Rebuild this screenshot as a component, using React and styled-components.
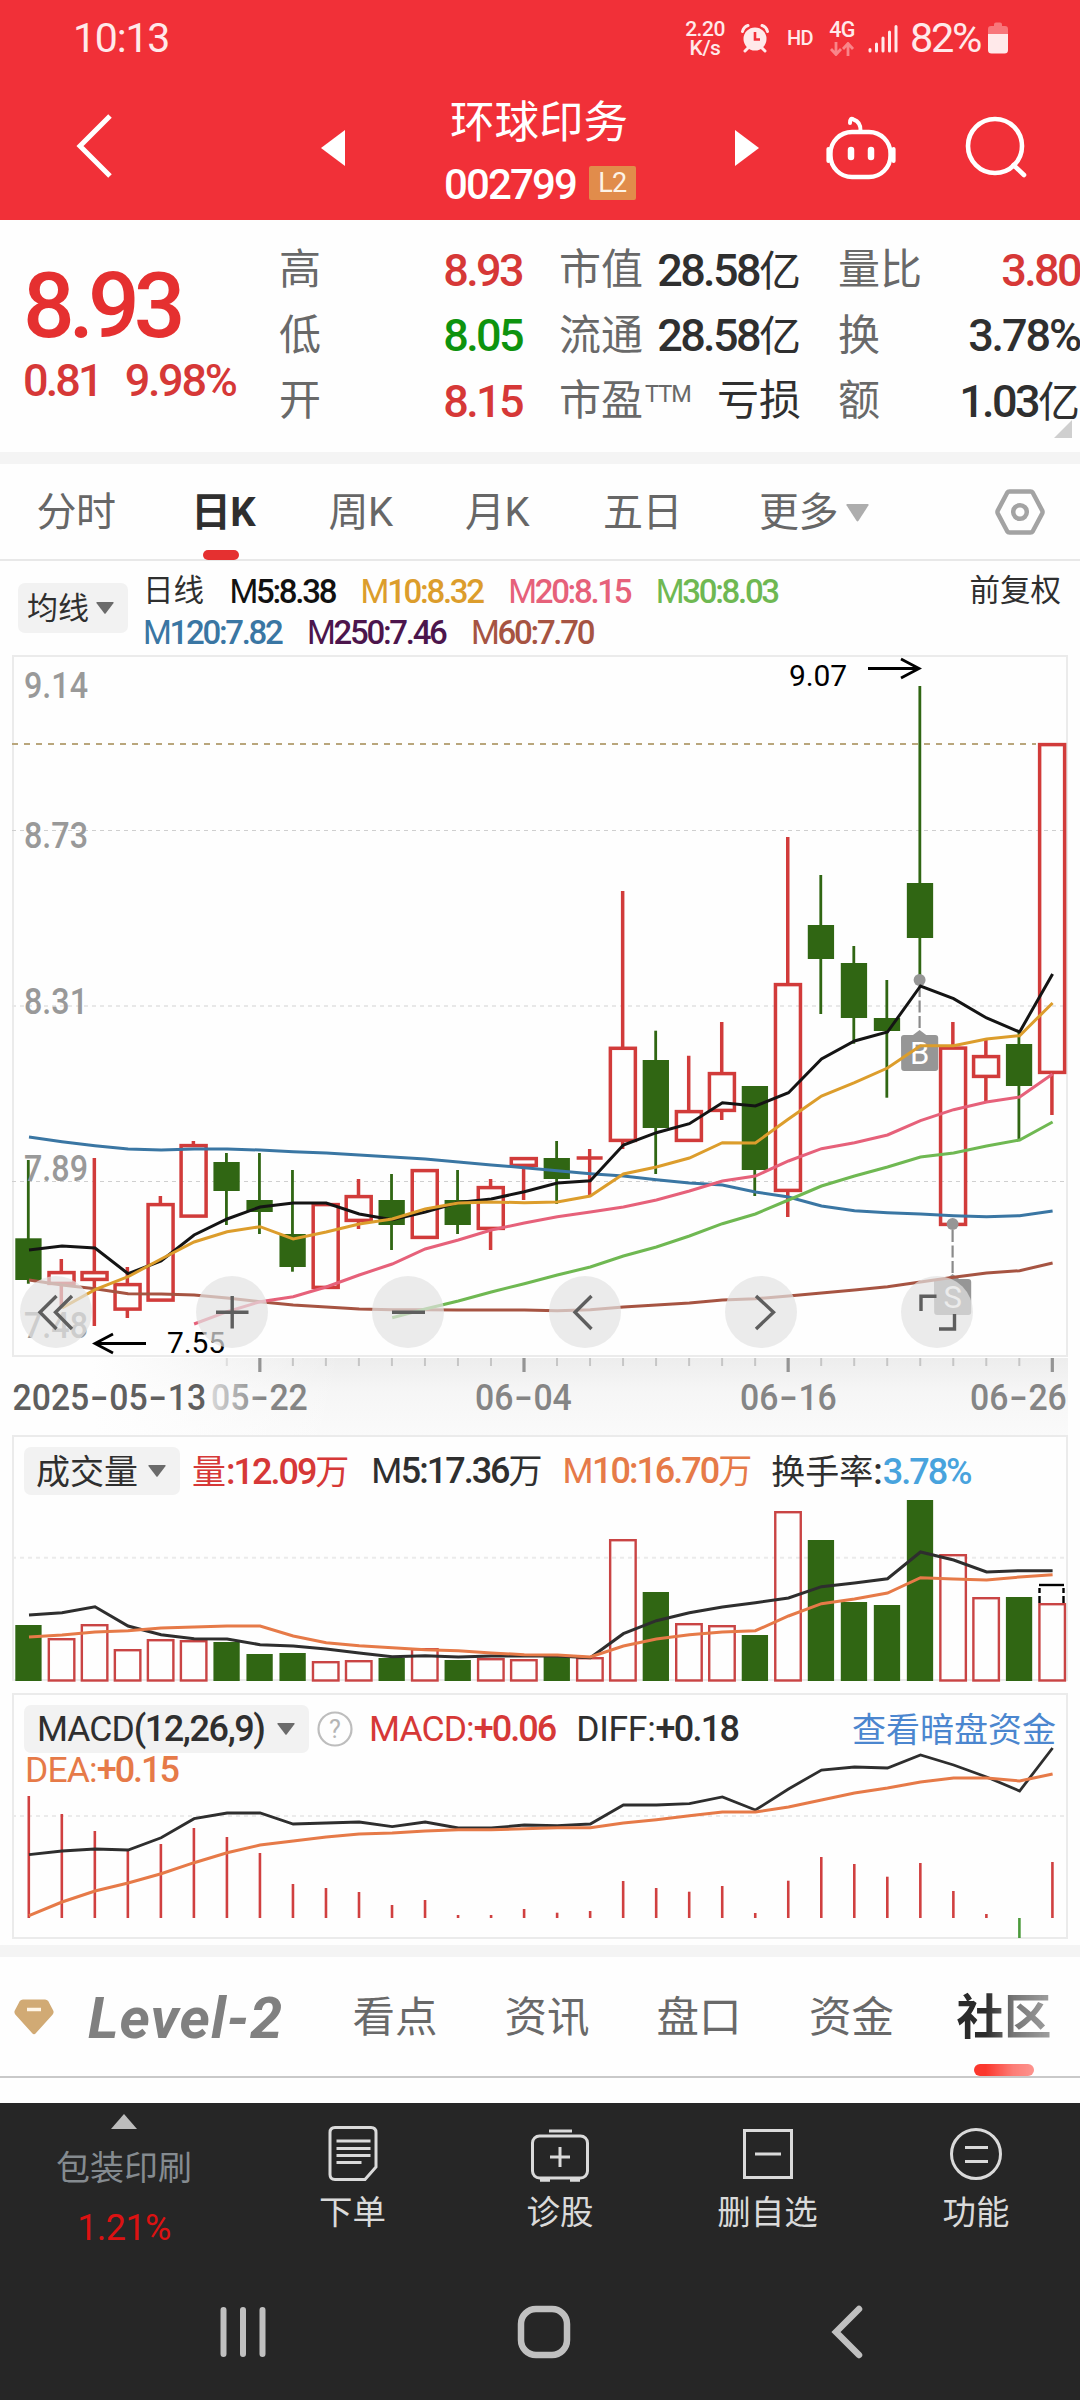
import React from "react";
import styled, { createGlobalStyle, css } from "styled-components";

const RED = "#e53030";
const CANDLE_RED = "#d13b3a";
const CANDLE_GREEN = "#306613";
const FRAME = "#ebebeb";
const ORANGE = "#e67a48";
const INK = "#2f2f2f";

const GlobalStyle = createGlobalStyle`
  * { box-sizing: border-box; }
  body { margin: 0; background: #fff; }
  #root { width: 1080px; }
`;

const Screen = styled.main`
  width: 1080px;
  height: 2400px;
  display: flex;
  flex-direction: column;
  overflow: hidden;
  background: #fefefe;
  color: ${INK};
  font-family: Roboto, "Noto Sans CJK SC", sans-serif;
  line-height: 1;
  white-space: nowrap;
  svg { display: block; flex: none; }
`;

const Num = styled.span`
  font-size: ${(p) => p.$size || 45}px;
  font-weight: ${(p) => p.$weight || 500};
  letter-spacing: ${(p) => p.$track ?? -2.6}px;
  color: ${(p) => p.$color || "inherit"};
`;

/* ---------- status bar and header ---------- */

const Top = styled.header`
  height: 220px;
  flex: none;
  background: #f13038;
  color: #fff;
`;

const StatusBar = styled.div`
  height: 76px;
  display: flex;
  align-items: center;
  padding: 0 72px 0 73px;
  color: #ffe9ea;
`;

const Clock = styled.span`
  flex: 1;
  font-size: 41px;
  letter-spacing: -1.2px;
`;

const Speed = styled.div`
  width: 40px;
  margin-right: 15px;
  display: flex;
  flex-direction: column;
  align-items: center;
  font-size: 21px;
  font-weight: 500;
  line-height: 18.5px;
  letter-spacing: -0.5px;
  padding-top: 1px;
`;

const Small = styled.span`
  font-size: 20px;
  font-weight: 500;
  letter-spacing: -0.8px;
  width: 42px;
  padding-left: 17px;
`;

const Network = styled.div`
  width: 28px;
  margin: 0 12px 0 16px;
  display: flex;
  flex-direction: column;
  align-items: center;
  gap: 4px;
  font-size: 21.5px;
  font-weight: 500;
  line-height: 17px;
  letter-spacing: -0.8px;
`;

const Charge = styled.span`
  font-size: 41.5px;
  letter-spacing: -2.3px;
  width: 90px;
  padding-left: 12px;
`;

const TitleBar = styled.div`
  height: 144px;
  display: grid;
  grid-template-columns: 300px 66px 348px 66px 300px;
  align-items: center;
`;

const BackSlot = styled.div`
  padding: 0 0 4px 74px;
`;

const ArrowSlot = styled.div`
  display: flex;
  justify-content: center;
`;

const TitleBlock = styled.div`
  align-self: stretch;
  display: flex;
  flex-direction: column;
  align-items: center;
  padding-top: 24px;
`;

const Title = styled.h1`
  margin: 0 0 0 -2px;
  font-size: 44.5px;
  font-weight: 400;
  line-height: 46px;
`;

const CodeRow = styled.div`
  display: flex;
  align-items: center;
  gap: 13px;
  margin-top: 20px;
  height: 34px;
`;

const Code = styled(Num)`
  padding-top: 3px;
`;

const LevelBadge = styled.span`
  width: 47px;
  height: 34px;
  display: flex;
  align-items: center;
  justify-content: center;
  background: #e18c4b;
  border-radius: 2px;
  font-size: 27px;
  letter-spacing: -0.6px;
  color: #fdf3e6;
`;

const HeaderActions = styled.div`
  display: flex;
  gap: 67px;
  padding: 0 0 0 45px;
`;

/* ---------- quote ---------- */

const Quote = styled.section`
  height: 232px;
  flex: none;
  display: grid;
  grid-template-columns: 279px 243px 37px 242px 37px 242px;
`;

const PriceBlock = styled.div`
  padding: 43px 0 0 23px;
`;

const Price = styled.div`
  font-size: 91px;
  font-weight: 500;
  letter-spacing: -6px;
  line-height: 87px;
  color: ${RED};
`;

const Change = styled.div`
  display: flex;
  gap: 24px;
  margin-top: 8px;
  line-height: 45px;
  color: #d63837;
`;

const Facts = styled.dl`
  margin: 0;
  padding-top: 17.5px;
`;

const Fact = styled.div`
  height: 65.5px;
  display: flex;
  justify-content: space-between;
  align-items: center;
  dt { font-size: 42px; color: #696969; }
  sup { font-size: 23.5px; font-weight: 400; vertical-align: 13px; line-height: 0; letter-spacing: -1px; margin-left: 2px; }
  dd { margin: 0; font-size: 42px; color: ${(p) => p.$color || INK}; }
`;

const Band = styled.div`
  height: 12px;
  flex: none;
  background: #f4f4f4;
`;

const Spacer = styled.div``;

const MoreCorner = styled.div`
  width: 18px;
  height: 18px;
  margin: -14px 8px 0 auto;
  background: #cfcfcf;
  clip-path: polygon(100% 0, 100% 100%, 0 100%);
`;

/* ---------- period tabs ---------- */

const PeriodTabs = styled.nav`
  height: 97px;
  flex: none;
  display: grid;
  grid-template-columns: 152px 142px 133px 140px 151px 192px 170px;
  border-bottom: 2px solid #e8e8e8;
`;

const Period = styled.div`
  position: relative;
  display: flex;
  align-items: center;
  justify-content: center;
  gap: 8px;
  font-size: 40px;
  color: ${(p) => (p.$active ? INK : "#676767")};
  font-weight: ${(p) => (p.$active ? 700 : 400)};
  letter-spacing: -0.6px;
  padding-top: 3px;
  ${(p) =>
    p.$active &&
    css`
      &::after {
        content: "";
        position: absolute;
        bottom: -1px;
        width: 36px;
        height: 10px;
        border-radius: 5px;
        background: ${RED};
        transform: translateX(-2px);
      }
    `}
`;

const SettingSlot = styled.div`
  display: flex;
  align-items: center;
  justify-content: flex-end;
  padding-right: 35px;
`;

/* ---------- indicators ---------- */

const MaBar = styled.div`
  height: 94px;
  flex: none;
  display: flex;
  padding: 10px 19px 0 18px;
`;

const Chip = styled.div`
  width: ${(p) => p.$w}px;
  height: ${(p) => p.$h}px;
  flex: none;
  display: flex;
  align-items: center;
  justify-content: space-between;
  padding: 0 14px 0 ${(p) => p.$pad || 9}px;
  background: #f2f2f2;
  border-radius: 7px;
  font-size: ${(p) => p.$size}px;
`;

const MaChipSlot = styled.div`
  width: 125px;
  padding-top: 12px;
`;

const MaLegend = styled.div`
  flex: 1;
`;

const MaRow = styled.div`
  display: flex;
  gap: 25.5px;
  height: 41px;
  align-items: center;
  font-size: 30.5px;
`;

const Reading = styled.span`
  font-size: 33px;
  color: ${(p) => p.$color};
  font-weight: 500;
  letter-spacing: -2.3px;
  i { font-style: normal; font-weight: 400; }
`;

const Adjust = styled.span`
  font-size: 30.5px;
  height: 41px;
  line-height: 40px;
`;

const Panel = styled.section`
  width: 1056px;
  height: ${(p) => p.$h}px;
  flex: none;
  margin: 0 0 ${(p) => p.$mb || 0}px 12px;
  display: grid;
  > * { grid-area: 1 / 1; }
`;

const ButtonRow = styled.div`
  align-self: end;
  display: flex;
  justify-content: space-between;
  padding: 0 95px 0 8px;
  margin-bottom: 10px;
`;

const RoundButton = styled.button`
  width: 72px;
  height: 72px;
  padding: 0;
  border: 0;
  border-radius: 50%;
  background: rgba(226, 226, 226, 0.7);
`;

const AxisArea = styled.div`
  width: 1056px;
  height: 77px;
  flex: none;
  margin-left: 12px;
  background: linear-gradient(90deg, #fefefe 0, #fefefe 80px, rgba(254,254,254,0) 330px),
    linear-gradient(180deg, #ededed 0, #f6f6f6 45%, #fafafa 100%);
`;

const IndicatorHead = styled.div`
  display: flex;
  align-items: center;
  height: 48px;
  margin: ${(p) => p.$mt}px 0 0 12px;
  font-size: 34px;
`;

const HeadItem = styled.span`
  margin-left: ${(p) => p.$ml}px;
  padding-top: ${(p) => p.$drop || 0}px;
  color: ${(p) => p.$color};
  font-size: 34px;
  b { font-weight: 500; font-size: 36px; letter-spacing: ${(p) => p.$track ?? -2}px; }
  i { font-style: normal; font-size: 35.5px; letter-spacing: ${(p) => p.$ltrack ?? -1.6}px; }
`;

const DarkPool = styled.a`
  margin-left: auto;
  padding: 2px 12px 0 0;
  font-size: 34px;
  color: #4b86cf;
`;

const Dea = styled.div`
  padding: 1px 0 0 13px;
  line-height: 33px;
  font-size: 35px;
  color: ${ORANGE};
`;

const MacdHead = styled.div``;

/* ---------- section tabs ---------- */

const SectionTabs = styled.nav`
  height: 121px;
  flex: none;
  display: grid;
  grid-template-columns: 88px 231px 152px 152px 152px 153px 152px;
  align-items: center;
  border-bottom: 2px solid #c9c9c9;
  font-size: 42.5px;
  color: #696969;
`;

const Diamond = styled.div`
  padding-left: 13px;
`;

const LevelWord = styled.span`
  font-size: 58px;
  font-weight: 700;
  font-style: italic;
  letter-spacing: 1px;
  padding-top: 3px;
  color: #808080;
`;

const SectionTab = styled.span`
  text-align: center;
  padding-top: 3px;
`;

const ActiveSection = styled.span`
  position: relative;
  height: 119px;
  display: flex;
  align-items: center;
  justify-content: center;
  padding-top: 4px;
  font-size: 47.5px;
  font-weight: 700;
  color: #2b2b2b;
  mask-image: linear-gradient(90deg, #000 38%, rgba(0, 0, 0, 0.65) 56%, rgba(0, 0, 0, 0.42) 84%);
  &::after {
    content: "";
    position: absolute;
    bottom: 0;
    width: 60px;
    height: 12px;
    border-radius: 6px;
    background: #fb372d;
  }
`;

/* ---------- bottom ---------- */

const Bottom = styled.footer`
  flex: 1;
  margin-top: 25px;
  background: #262626;
`;

const ActionBar = styled.div`
  height: 150px;
  display: grid;
  grid-template-columns: 248px 209px 206px 209px 208px;
`;

const Sector = styled.div`
  display: flex;
  flex-direction: column;
  align-items: center;
  padding-top: 11px;
  font-size: 34px;
  color: #858b90;
`;

const SectorName = styled.span`
  margin-top: 22px;
`;

const SectorChange = styled.span`
  margin-top: 25px;
  font-size: 36px;
  letter-spacing: -0.6px;
  color: #dc1212;
`;

const Action = styled.div`
  display: flex;
  flex-direction: column;
  align-items: center;
  padding-top: 21px;
  gap: 14px;
  font-size: 33.5px;
  color: #dadada;
`;

const SystemNav = styled.div`
  height: 147px;
  display: grid;
  grid-template-columns: 485px 118px 487px;
  padding-top: 47px;
  justify-items: center;
`;

/* ---------- data ---------- */

const X0 = 28.3;
const STEP = 33.02;
const cx = (i) => X0 + STEP * i;

// [high, bodyTop, bodyBottom, low, rising]
const candles = [
  [1160, 1238.3, 1280, 1283.7, 0], [1259, 1271, 1285, 1308, 1], [1158, 1271, 1281, 1326, 1],
  [1267, 1283, 1310.7, 1318, 1], [1196, 1203, 1301.7, 1301, 1], [1141, 1144, 1217.7, 1217, 1],
  [1153, 1162, 1191, 1225, 0], [1153, 1200, 1212, 1234, 0], [1170, 1234, 1267, 1271.7, 0],
  [1203, 1203, 1289, 1289, 1], [1179, 1195, 1222, 1229, 1], [1174, 1200, 1225, 1250, 0],
  [1169, 1169, 1239, 1239, 1], [1170, 1200, 1225, 1234, 0], [1179, 1186, 1230, 1250, 1],
  [1157, 1157, 1167, 1200, 1], [1141, 1158, 1179, 1204, 0], [1149, 1158, 1158, 1195, 1],
  [891, 1046.7, 1142, 1149, 1], [1030.7, 1060, 1128, 1174, 0], [1055.7, 1110, 1142, 1142, 1],
  [1022, 1072, 1112, 1120, 1], [1086, 1086, 1170, 1196, 0], [837, 983, 1192, 1217, 1],
  [875, 925, 959, 1014, 0], [946, 963, 1018, 1043.7, 0], [980, 1018, 1031, 1097.7, 0],
  [686, 883, 938, 980, 0], [1022, 1046.5, 1226, 1226, 1], [1039, 1055, 1078, 1101.7, 1],
  [1030, 1044, 1086, 1139, 0], [743, 743, 1074, 1115, 1],
];

const averages = [
  { color: "#3a76a3", from: 0, y: [1137, 1141.7, 1145.7, 1149, 1150, 1149, 1149, 1150, 1151.7, 1153, 1155, 1157, 1159, 1162, 1165, 1167.7, 1170.7, 1173.7, 1176, 1179.7, 1183, 1185, 1192, 1197, 1206, 1210.7, 1212.7, 1214, 1215.7, 1216.7, 1215.7, 1211] },
  { color: "#a65442", from: 0, y: [1280, 1285, 1288.7, 1293.7, 1294, 1295, 1298, 1301.7, 1305, 1307, 1309, 1309.7, 1309.7, 1310, 1310, 1310, 1310.7, 1309.7, 1307, 1305, 1303, 1300, 1298.7, 1296, 1293, 1290, 1286.7, 1282, 1277.3, 1273, 1270.7, 1263] },
  { color: "#6fb852", from: 11, y: [1317.7, 1309, 1301, 1292, 1283.7, 1275, 1267, 1256, 1247, 1236, 1223.7, 1214, 1200, 1186, 1176, 1167, 1157, 1153, 1146, 1140, 1122] },
  { color: "#e6617a", from: 5, y: [1324, 1311.7, 1301.7, 1296.7, 1287, 1275, 1264, 1249, 1240, 1230, 1223, 1216.7, 1212, 1207, 1200, 1191, 1181, 1176, 1161, 1148.7, 1142.7, 1135, 1120.7, 1109.7, 1102, 1097, 1074] },
  { color: "#141414", from: 0, y: [1250, 1246, 1248, 1273.7, 1261, 1235, 1219, 1207, 1203, 1203, 1214, 1219.7, 1212, 1202.5, 1199, 1191.7, 1183, 1180.7, 1145, 1132.7, 1123.7, 1102.7, 1106, 1092.7, 1059, 1041, 1032, 986, 998.7, 1018, 1032, 974] },
  { color: "#dc9d2c", from: 1, y: [1308, 1289.7, 1276.7, 1259, 1242, 1231.7, 1226.7, 1239, 1232, 1224, 1219, 1209, 1203, 1202, 1202.7, 1202, 1196, 1174, 1167, 1158, 1142.7, 1143, 1119, 1096, 1082.7, 1068, 1045.7, 1045.7, 1039, 1035.7, 1003] },
];

const volumes = [1625, 1638, 1624, 1649, 1639, 1640, 1642, 1654, 1653, 1661, 1660, 1658, 1648, 1660, 1658, 1659, 1657, 1657, 1539, 1592, 1623, 1625, 1635, 1511, 1540, 1602, 1605, 1500, 1554, 1597, 1597, 1603];
const volM5 = [1615, 1612.7, 1606.7, 1626, 1634.7, 1638.7, 1639, 1644.7, 1646, 1649, 1653, 1656.7, 1655.7, 1657, 1656, 1656, 1656, 1657.7, 1633.7, 1620.7, 1612.7, 1607, 1602.7, 1598, 1586.7, 1583, 1578.7, 1552, 1560, 1572, 1570.7, 1570.7];
const volM10 = [1637, 1635, 1632, 1630.7, 1628, 1627, 1626, 1626, 1636, 1642.7, 1645.7, 1647.7, 1649.7, 1650.7, 1653, 1654.7, 1655, 1657, 1646, 1639, 1634.7, 1632, 1630.7, 1616, 1603.7, 1599, 1593, 1577.7, 1579, 1580, 1577, 1574.7];

const macdBars = [1796, 1814, 1831, 1850, 1844, 1828, 1837, 1853, 1884, 1888, 1892, 1905, 1900, 1915, 1915, 1909, 1912.7, 1911, 1881, 1888, 1891.7, 1886, 1913, 1880.7, 1857, 1864, 1876.7, 1863, 1891, 1914, 1938, 1862];
const diff = [1854.7, 1851, 1849, 1850, 1837.7, 1818.7, 1813, 1813, 1824, 1823, 1822, 1826.7, 1822, 1828, 1828, 1825, 1825.7, 1824, 1805, 1805, 1803.7, 1797, 1810, 1789, 1770, 1767, 1768, 1755, 1765, 1777, 1791, 1748];
const dea = [1915.7, 1902, 1891, 1883, 1873.7, 1862.7, 1852.7, 1845, 1841, 1837, 1834, 1833, 1831, 1829.7, 1829.7, 1828.7, 1827.7, 1827.7, 1823, 1819.7, 1815.7, 1812, 1812, 1807, 1800, 1793, 1788, 1782, 1778, 1778, 1781, 1774];

const points = (ys, from = 0, dx = 0.7) =>
  ys.map((y, k) => `${(cx(k + from) + dx).toFixed(1)},${y}`).join(" ");

/* ---------- drawings ---------- */

const Down = ({ w = 18, h = 12, color = "#6b6b6b" }) => (
  <svg width={w} height={h} viewBox="0 0 18 12" preserveAspectRatio="none">
    <path d="M1 0h16q1 0 .6.9L9.8 11.2q-.8 1-1.6 0L.4.9Q0 0 1 0z" fill={color} />
  </svg>
);

function CandleChart() {
  return (
    <svg width="1056" height="703" viewBox="12 655 1056 703" fontFamily="Roboto, sans-serif">
      <rect x="13" y="656" width="1054" height="700" fill="none" stroke={FRAME} strokeWidth="2" />
      <path d="M12 744H1036" stroke="#b9a67c" strokeWidth="2" strokeDasharray="6 6" />
      <path d="M12 830.5H1066M12 1181.5H1066" stroke="#cfcfcf" strokeWidth="1" strokeDasharray="4 4" />
      <path d="M12 1006H1066" stroke="#e8e8e8" strokeWidth="2" strokeDasharray="4 4" />
      {candles.map(([hi, top, bot, lo, up], i) => {
        const x = cx(i);
        if (!up)
          return (
            <g key={i} fill={CANDLE_GREEN}>
              <rect x={x - 1.4} y={hi} width="2.8" height={lo - hi} />
              <rect x={x - 13} y={top} width="26.3" height={bot - top} />
            </g>
          );
        if (top === bot)
          return <path key={i} d={`M${x} ${hi}V${lo}M${x - 13} ${top}h26`} stroke={CANDLE_RED} strokeWidth="3.4" />;
        return (
          <g key={i} stroke={CANDLE_RED} strokeWidth="3.5" fill="none">
            <path d={`M${x} ${hi}V${top + 1}M${x} ${bot - 1}V${lo}`} />
            <rect x={x - 12.3} y={top + 1.6} width="25" height={bot - top - 3.2} />
          </g>
        );
      })}
      <g fontSize="36" fontWeight="500" fill="#999">
        {[["9.14", 698], ["8.73", 848], ["8.31", 1014], ["7.89", 1181], ["7.48", 1338]].map(([t, y]) => (
          <text key={t} x="24" y={y} textLength="64" lengthAdjust="spacingAndGlyphs">{t}</text>
        ))}
      </g>
      <g fill="#969696">
        <circle cx="919.6" cy="980" r="6" />
        <path d="M901 1038q0-3 3-3h9l6.6-5 6.6 5h9q3 0 3 3v30q0 3-3 3h-31q-3 0-3-3z" />
        <circle cx="952.6" cy="1224" r="6" />
        <path d="M934 1282q0-3 3-3h9l6.6-5 6.6 5h9q3 0 3 3v30q0 3-3 3h-31q-3 0-3-3z" />
      </g>
      <path d="M919.6 985V1030M952.6 1230V1274" stroke="#8a8a8a" strokeWidth="2.2" strokeDasharray="12 3.5" />
      <g fontSize="31" fill="#fff" textAnchor="middle">
        <text x="919.6" y="1064">B</text>
        <text x="952.6" y="1308">S</text>
      </g>
      {averages.map((a) => (
        <polyline key={a.color} points={points(a.y, a.from)} fill="none" stroke={a.color} strokeWidth="3" />
      ))}
      <g fontSize="30" fill="#000">
        <text x="789" y="686" textLength="58">9.07</text>
        <text x="167" y="1353" textLength="58">7.55</text>
      </g>
      <path d="M868 668.5h50M901 659l18 9.5-18 9.5M146 1343.5H96M113 1334l-18 9.5 18 9.5" fill="none" stroke="#000" strokeWidth="2.8" />
    </svg>
  );
}

const Glyph = ({ d }) => (
  <svg width="72" height="72" viewBox="0 0 72 72">
    <path d={d} fill="none" stroke="#5e5e5e" strokeWidth="3.4" />
  </svg>
);

const chartButtons = [
  "M36.5 20L20 36.2 36.500 53M52 20L35.5 36.2 52 53",
  "M20 36.2h32.5M36.2 20v32.5",
  "M20 36.2h33",
  "M42.5 20L26 36.2 42.5 53",
  "M31 20l17.5 16.2L31 53",
  "M20 35V20.2h15.5M38 53h15.5V38",
];

const dates = [
  ["05-22", 211], ["06-04", 475], ["06-16", 740], ["06-26", 970],
];

function DateAxis() {
  return (
    <svg width="1056" height="77" viewBox="12 1358 1056 77" fontFamily="Roboto, sans-serif" fontSize="36" fontWeight="500">
      <defs>
        <linearGradient id="fade" gradientUnits="userSpaceOnUse" x1="205" y1="0" x2="262" y2="0">
          <stop offset="0" stopColor="#e2e2e2" />
          <stop offset="1" stopColor="#858585" />
        </linearGradient>
      </defs>
      {Array.from({ length: 26 }, (_, k) => k + 6).map((i) => {
        const major = i % 8 === 7;
        return (
          <rect key={i} x={cx(i) - (major ? 1.2 : 0.6)} y="1357" width={major ? 3.2 : 2} height={major ? 15 : 9}
            fill={major ? "#949494" : i === 6 ? "#dedede" : "#c6c6c6"} />
        );
      })}
      <DateText x={12.5} text="2025-05-13" fill="#5f5f5f" />
      {dates.map(([t, x], k) => (
        <DateText key={t} x={x} text={t} fill={k ? "#858585" : "url(#fade)"} />
      ))}
    </svg>
  );
}

function DateText({ x, text, fill }) {
  let pen = x;
  return (
    <g fill={fill}>
      {text.split("-").map((part, k) => {
        const w = part.length * 19.2;
        const at = pen + (k ? 20 : 0);
        const dash = pen;
        pen = at + w;
        return (
          <React.Fragment key={k}>
            {k > 0 && <text x={dash + 1} y="1410" textLength="18" lengthAdjust="spacingAndGlyphs">-</text>}
            <text x={at} y="1410" textLength={w} lengthAdjust="spacingAndGlyphs">{part}</text>
          </React.Fragment>
        );
      })}
    </g>
  );
}

function VolumeChart() {
  return (
    <svg width="1056" height="247" viewBox="12 1435 1056 247">
      <rect x="13" y="1436" width="1054" height="244" fill="none" stroke={FRAME} strokeWidth="2" />
      <path d="M12 1557.7H1066" stroke="#ebebeb" strokeWidth="2" strokeDasharray="4 4" />
      {volumes.map((y, i) =>
        candles[i][4] ? (
          <rect key={i} x={cx(i) - 12.5} y={y + 1.2} width="25.5" height={1680.5 - y - 1.2} fill="none" stroke="#c94444" strokeWidth="2.4" />
        ) : (
          <rect key={i} x={cx(i) - 13} y={y} width="26.3" height={1681 - y} fill={CANDLE_GREEN} />
        )
      )}
      <path d="M1039.5 1603V1588M1063.5 1603V1588" stroke="#000" strokeWidth="2.4" strokeDasharray="7 3" />
      <path d="M1039 1585h25" stroke="#000" strokeWidth="2.4" />
      <polyline points={points(volM5)} fill="none" stroke="#2e2e2e" strokeWidth="3" />
      <polyline points={points(volM10)} fill="none" stroke={ORANGE} strokeWidth="3" />
    </svg>
  );
}

function MacdChart() {
  return (
    <svg width="1056" height="246" viewBox="12 1693 1056 246">
      <rect x="13" y="1694" width="1054" height="244" fill="none" stroke={FRAME} strokeWidth="2" />
      <path d="M12 1816H1066" stroke="#ebebeb" strokeWidth="2" strokeDasharray="4 4" />
      {macdBars.map((y, i) => (
        <path key={i} d={`M${cx(i) + 0.5} ${y}V1918`} stroke={y > 1918 ? "#4b9a3b" : "#d04040"} strokeWidth="2.6" />
      ))}
      <polyline points={points(diff)} fill="none" stroke="#2e2e2e" strokeWidth="2.8" />
      <polyline points={points(dea)} fill="none" stroke={ORANGE} strokeWidth="3" />
    </svg>
  );
}

const AlarmIcon = () => (
  <svg width="30" height="30" viewBox="0 0 30 30">
    <circle cx="15" cy="16" r="11.5" fill="#ffe9ea" />
    <path d="M2.5 8.5Q3.5 4 8 2.5M27.5 8.5Q26.5 4 22 2.5M8 25l-3 3M22 25l3 3" stroke="#ffe9ea" strokeWidth="3" strokeLinecap="round" fill="none" />
    <path d="M15 9v7.5h5" fill="none" stroke="#f13038" strokeWidth="2.6" />
  </svg>
);

const DataArrows = () => (
  <svg width="26" height="14" viewBox="0 0 26 14" fill="none" stroke="#f98589" strokeWidth="2.8">
    <path d="M7 0v12M2 7l5 5.5L12 7M19 14V2M14 7l5-5.500L24 7" />
  </svg>
);

const Signal = () => (
  <svg width="30" height="30" viewBox="0 0 30 30" stroke="#ffe9ea" strokeWidth="3" strokeLinecap="round">
    <path d="M2 28v-1.5M8.5 28v-7M15 28V15M21.5 28V9M28 28V3.5" />
  </svg>
);

const Battery = () => (
  <svg width="20" height="32" viewBox="0 0 20 32">
    <path d="M6 2.5Q6 .5 8 .5h4q2 0 2 2V4h3q3 0 3 3v5H0V7q0-3 3-3h3z" fill="#f8767b" />
    <path d="M0 12h20v16q0 3.5-3.5 3.5h-13Q0 31.5 0 28z" fill="#ffe9ea" />
  </svg>
);

const RobotIcon = () => (
  <svg width="72" height="66" viewBox="0 0 72 66" fill="none" stroke="#fff" strokeWidth="4.4" strokeLinecap="round">
    <path d="M25 8Q25 2 28.5 4.5Q36 7 35.5 16" strokeWidth="4" />
    <rect x="5.500" y="17" width="60" height="45" rx="21.5" />
    <path d="M3.4 34v12M68.6 34v12" strokeWidth="4" />
    <path d="M26 35v7M46 35v7" strokeWidth="6.5" />
  </svg>
);

const SearchIcon = () => (
  <svg width="64" height="64" viewBox="0 0 64 64" fill="none" stroke="#fff" strokeWidth="4.6">
    <circle cx="31" cy="31" r="27" />
    <path d="M49.5 50l10.5 10" strokeLinecap="round" />
  </svg>
);

const OrderIcon = () => (
  <svg width="56" height="58" viewBox="0 0 56 58" fill="none" stroke="#dadada" strokeWidth="3">
    <path d="M10 3.5h36q5 0 5 5V43L40 55.5H10q-5 0-5-5v-42q0-5 5-5z" />
    <path d="M11.5 17h34M11.5 24.5h34M11.5 31.5h34M11.5 38.5h25" />
  </svg>
);

const ClinicIcon = () => (
  <svg width="60" height="58" viewBox="0 0 60 58" fill="none" stroke="#dadada" strokeWidth="3">
    <rect x="2.5" y="12" width="55" height="42" rx="7" />
    <path d="M19 7h23M30 23v20M20 33h20" />
    <path d="M10 56h10M40 56h10" strokeWidth="3.5" />
  </svg>
);

const RemoveIcon = () => (
  <svg width="56" height="58" viewBox="0 0 56 58" fill="none" stroke="#dadada" strokeWidth="3">
    <rect x="4.5" y="6.5" width="47" height="47" />
    <path d="M15 30h26" />
  </svg>
);

const FeatureIcon = () => (
  <svg width="56" height="58" viewBox="0 0 56 58" fill="none" stroke="#dadada" strokeWidth="3">
    <circle cx="28" cy="30" r="24.5" />
    <path d="M17 23.5h23M17 37.5h23" />
  </svg>
);

const actions = [
  ["下单", OrderIcon], ["诊股", ClinicIcon], ["删自选", RemoveIcon], ["功能", FeatureIcon],
];

/* ---------- page ---------- */

export default function App() {
  return (
    <Screen>
      <GlobalStyle />
      <Top>
        <StatusBar>
          <Clock>10:13</Clock>
          <Speed><span>2.20</span><span>K/s</span></Speed>
          <AlarmIcon />
          <Small>HD</Small>
          <Network><span>4G</span><DataArrows /></Network>
          <Signal />
          <Charge>82%</Charge>
          <Battery />
        </StatusBar>
        <TitleBar>
          <BackSlot>
            <svg width="42" height="66" viewBox="0 0 42 66"><path d="M36 3L6 33l30 30" fill="none" stroke="#fff" strokeWidth="5" /></svg>
          </BackSlot>
          <ArrowSlot><svg width="24" height="36"><path d="M24 0v36L0 18z" fill="#fff" /></svg></ArrowSlot>
          <TitleBlock>
            <Title>环球印务</Title>
            <CodeRow>
              <Code $size={42} $track={-1.9}>002799</Code>
              <LevelBadge>L2</LevelBadge>
            </CodeRow>
          </TitleBlock>
          <ArrowSlot><svg width="24" height="36"><path d="M0 0v36l24-18z" fill="#fff" /></svg></ArrowSlot>
          <HeaderActions><RobotIcon /><SearchIcon /></HeaderActions>
        </TitleBar>
      </Top>

      <Quote>
        <PriceBlock>
          <Price>8.93</Price>
          <Change><Num $track={-2.9}>0.81</Num><Num $track={-2.3}>9.98%</Num></Change>
        </PriceBlock>
        <Facts>
          <Fact $color="#d63837"><dt>高</dt><dd><Num>8.93</Num></dd></Fact>
          <Fact $color="#0e930e"><dt>低</dt><dd><Num>8.05</Num></dd></Fact>
          <Fact $color="#d63837"><dt>开</dt><dd><Num>8.15</Num></dd></Fact>
        </Facts>
        <Spacer />
        <Facts>
          <Fact><dt>市值</dt><dd><Num>28.58</Num>亿</dd></Fact>
          <Fact><dt>流通</dt><dd><Num>28.58</Num>亿</dd></Fact>
          <Fact><dt>市盈<sup>TTM</sup></dt><dd>亏损</dd></Fact>
        </Facts>
        <Spacer />
        <Facts>
          <Fact $color="#d63837"><dt>量比</dt><dd><Num>3.80</Num></dd></Fact>
          <Fact><dt>换</dt><dd><Num $track={-2.1}>3.78%</Num></dd></Fact>
          <Fact><dt>额</dt><dd><Num>1.03</Num>亿</dd></Fact>
          <MoreCorner />
        </Facts>
      </Quote>
      <Band />

      <PeriodTabs>
        <Period>分时</Period>
        <Period $active>日K</Period>
        <Period>周K</Period>
        <Period>月K</Period>
        <Period>五日</Period>
        <Period>更多<Down w={23} h={18} color="#adadad" /></Period>
        <SettingSlot>
          <svg width="50" height="46" viewBox="0 0 50 46" fill="none" stroke="#a3a3a3" strokeWidth="4.5">
            <path d="M14.5 2.5h21q1.5 0 2.3 1.3l9.4 17.7q.7 1.5 0 3l-9.4 17.7q-.8 1.3-2.3 1.3h-21q-1.5 0-2.3-1.3L2.8 24.5q-.7-1.5 0-3l9.4-17.7q.8-1.3 2.3-1.3z" />
            <circle cx="25" cy="23" r="6.8" />
          </svg>
        </SettingSlot>
      </PeriodTabs>

      <MaBar>
        <MaChipSlot>
          <Chip $w={110} $h={50} $size={31}>均线<Down /></Chip>
        </MaChipSlot>
        <MaLegend>
          <MaRow>
            <span>日线</span>
            <Reading $color="#111"><i>M</i>5:8.38</Reading>
            <Reading $color="#dc9d2c"><i>M</i>10:8.32</Reading>
            <Reading $color="#e6617a"><i>M</i>20:8.15</Reading>
            <Reading $color="#6fb852"><i>M</i>30:8.03</Reading>
          </MaRow>
          <MaRow>
            <Reading $color="#3a76a3"><i>M</i>120:7.82</Reading>
            <Reading $color="#4c154c"><i>M</i>250:7.46</Reading>
            <Reading $color="#a65442"><i>M</i>60:7.70</Reading>
          </MaRow>
        </MaLegend>
        <Adjust>前复权</Adjust>
      </MaBar>

      <Panel $h={703}>
        <CandleChart />
        <ButtonRow>
          {chartButtons.map((d) => (
            <RoundButton key={d}><Glyph d={d} /></RoundButton>
          ))}
        </ButtonRow>
      </Panel>
      <AxisArea><DateAxis /></AxisArea>

      <Panel $h={246} $mb={12}>
        <VolumeChart />
        <IndicatorHead $mt={12}>
          <Chip $w={156} $h={48} $size={34} $pad={12}><HeadItem $ml={0} $drop={1}>成交量</HeadItem><Down /></Chip>
          <HeadItem $ml={12} $drop={1} $color="#d63837">量<b>:12.09</b>万</HeadItem>
          <HeadItem $ml={22} $drop={1} $color={INK}><i>M</i><b>5:17.36</b>万</HeadItem>
          <HeadItem $ml={20} $drop={1} $color={ORANGE}><i>M</i><b>10:16.70</b>万</HeadItem>
          <HeadItem $ml={19} $drop={1} $color={INK}>换手率<b>:</b></HeadItem>
          <HeadItem $ml={2} $drop={1} $color="#48a3dd"><b>3.78%</b></HeadItem>
        </IndicatorHead>
      </Panel>

      <Panel $h={246} $mb={6}>
        <MacdChart />
        <MacdHead>
          <IndicatorHead $mt={12}>
            <Chip $w={285} $h={48} $size={35} $pad={13}>
              <HeadItem $ml={0} $drop={1} $color={INK} $track={-1.4} $ltrack={-1}><i>MACD</i><b>(12,26,9)</b></HeadItem>
              <Down />
            </Chip>
            <svg width="52" height="38" viewBox="0 0 52 38">
              <circle cx="26" cy="19" r="16.5" fill="none" stroke="#bdbdbd" strokeWidth="2.2" />
              <text x="26" y="28" textAnchor="middle" fontSize="25" fontFamily="Roboto, sans-serif" fill="#b5b5b5">?</text>
            </svg>
            <HeadItem $ml={8} $drop={1} $color="#d63837" $ltrack={-0.9}><i>MACD:</i><b>+0.06</b></HeadItem>
            <HeadItem $ml={21} $drop={1} $color={INK} $ltrack={-0.3} $track={-1.7}><i>DIFF:</i><b>+0.18</b></HeadItem>
            <DarkPool>查看暗盘资金</DarkPool>
          </IndicatorHead>
          <Dea><HeadItem $ml={0} $color={ORANGE} $ltrack={-0.9}><i>DEA:</i><b>+0.15</b></HeadItem></Dea>
        </MacdHead>
      </Panel>
      <Band />

      <SectionTabs>
        <Diamond>
          <svg width="42" height="38" viewBox="0 0 42 38">
            <path d="M10 1.5h22q2 0 3.2 1.5l5 9.5q1 2-.5 4L23 35q-2 2.5-4 0L2.3 16.5q-1.500-2-.5-4l5-9.5Q8 1.5 10 1.5z" fill="#d1aa74" />
            <path d="M14 11.5h14" stroke="#fff6e8" strokeWidth="3.5" />
          </svg>
        </Diamond>
        <LevelWord>Level-2</LevelWord>
        <SectionTab>看点</SectionTab>
        <SectionTab>资讯</SectionTab>
        <SectionTab>盘口</SectionTab>
        <SectionTab>资金</SectionTab>
        <ActiveSection>社区</ActiveSection>
      </SectionTabs>

      <Bottom>
        <ActionBar>
          <Sector>
            <svg width="26" height="15"><path d="M13 0l13 15H0z" fill="#bdbdbd" /></svg>
            <SectorName>包装印刷</SectorName>
            <SectorChange>1.21%</SectorChange>
          </Sector>
          {actions.map(([label, Icon]) => (
            <Action key={label}><Icon /><span>{label}</span></Action>
          ))}
        </ActionBar>
        <SystemNav>
          <svg width="50" height="60" viewBox="0 0 50 60" stroke="#c0c0c0" strokeWidth="6" strokeLinecap="round">
            <path d="M5.5 10v44M25 10v44M44.5 10v44" />
          </svg>
          <svg width="60" height="64" viewBox="0 0 60 64">
            <rect x="7" y="9" width="46" height="46" rx="15" fill="none" stroke="#c0c0c0" strokeWidth="6.5" />
          </svg>
          <svg width="36" height="62" viewBox="0 0 36 62">
            <path d="M30 9L7 32l23 23" fill="none" stroke="#c0c0c0" strokeWidth="6.5" strokeLinecap="round" />
          </svg>
        </SystemNav>
      </Bottom>
    </Screen>
  );
}
